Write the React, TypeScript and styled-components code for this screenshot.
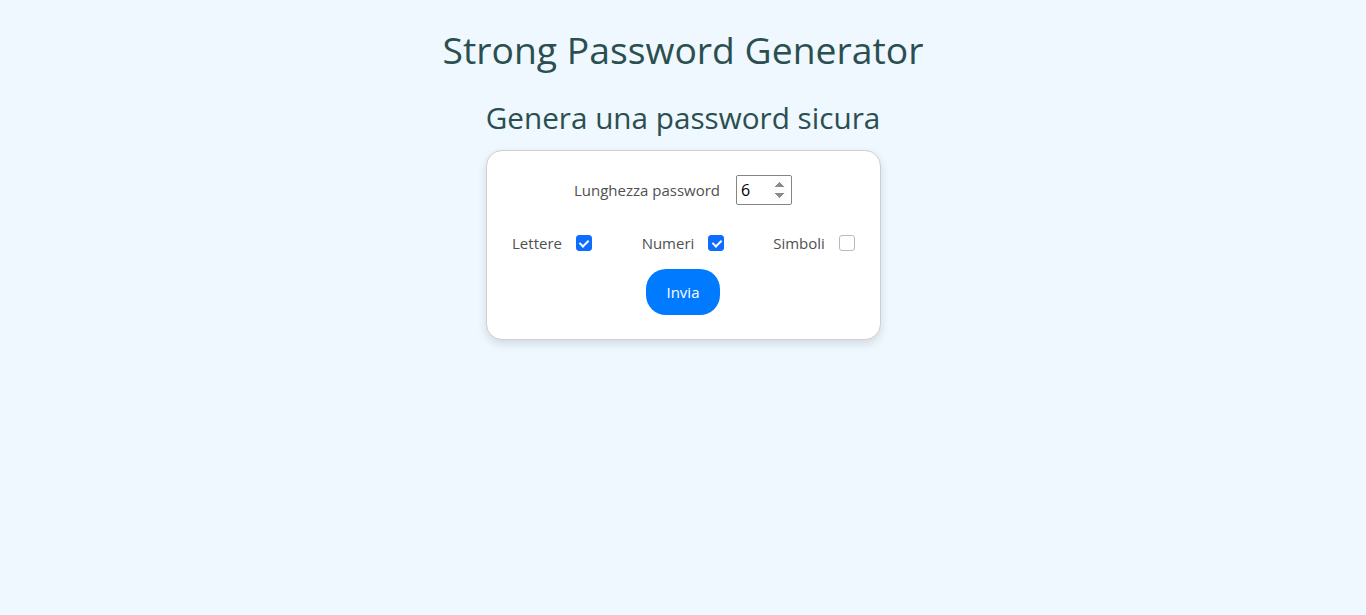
import React, { FunctionComponent, useState } from 'react';
import styled, { createGlobalStyle } from 'styled-components';

const GlobalStyle = createGlobalStyle`
  html, body {
    margin: 0;
    padding: 0;
    background: #eff7ff;
    font-family: "Open Sans", "Noto Sans", sans-serif;
  }
  * {
    box-sizing: border-box;
  }
`;

const Page = styled.main`
    min-height: 615px;
    display: flex;
    flex-direction: column;
    align-items: center;
    padding-top: 22px;
  `,
  Title = styled.h1`
    margin: 0;
    font-size: 37.3px;
    font-weight: 400;
    line-height: 56px;
    color: #2b4f4f;
  `,
  SubTitle = styled.h2`
    margin: 18px 0 0 0;
    font-size: 29.7px;
    font-weight: 400;
    line-height: 44px;
    color: #2b4f4f;
  `,
  Card = styled.form`
    margin-top: 10px;
    width: 395px;
    padding: 24px 0;
    background: #fff;
    border: 1px solid #cfcfcf;
    border-radius: 16px;
    box-shadow: 0 4px 10px rgba(0, 0, 0, 0.12);
    display: flex;
    flex-direction: column;
    align-items: center;
  `,
  LengthRow = styled.div`
    display: flex;
    align-items: center;
    gap: 16px;
    height: 30px;
    margin-bottom: 24px;
  `,
  Label = styled.label`
    font-size: 15px;
    color: #505050;
  `,
  NumberInput = styled.input`
    width: 56px;
    height: 30px;
    padding: 0 4px;
    border: 1px solid #858585;
    border-radius: 2px;
    font-family: inherit;
    font-size: 16px;
    color: #000;
    &::-webkit-inner-spin-button {
      opacity: 1;
    }
  `,
  OptionsRow = styled.div`
    width: 100%;
    display: grid;
    grid-template-columns: repeat(3, 1fr);
    height: 28px;
    margin-bottom: 12px;
  `,
  Option = styled.div`
    display: flex;
    align-items: center;
    justify-content: center;
    gap: 14px;
  `,
  Check = styled.input`
    appearance: none;
    margin: 0;
    width: 16px;
    height: 16px;
    border-radius: 3px;
    border: 1px solid #b9b9b9;
    background: #fff;
    position: relative;
    &:checked {
      background: #0d6efd;
      border-color: #0d6efd;
    }
    &:checked::after {
      content: '';
      position: absolute;
      left: 4.5px;
      top: 2px;
      width: 4px;
      height: 7px;
      border: solid #fff;
      border-width: 0 2px 2px 0;
      transform: rotate(45deg);
    }
  `,
  SubmitButton = styled.button`
    width: 74px;
    height: 46px;
    border: none;
    border-radius: 20px;
    background: #007bff;
    color: #fff;
    font-family: inherit;
    font-size: 15px;
    cursor: pointer;
  `;

type OptionKey = 'letters' | 'numbers' | 'symbols';

const options: { key: OptionKey; label: string }[] = [
  { key: 'letters', label: 'Lettere' },
  { key: 'numbers', label: 'Numeri' },
  { key: 'symbols', label: 'Simboli' },
];

const App: FunctionComponent = () => {
  const [length, setLength] = useState(6);
  const [checked, setChecked] = useState<Record<OptionKey, boolean>>({
    letters: true,
    numbers: true,
    symbols: false,
  });

  return (
    <>
      <GlobalStyle />
      <Page>
        <Title>Strong Password Generator</Title>
        <SubTitle>Genera una password sicura</SubTitle>
        <Card onSubmit={(e) => e.preventDefault()}>
          <LengthRow>
            <Label htmlFor="length">Lunghezza password</Label>
            <NumberInput
              id="length"
              type="number"
              min={4}
              max={32}
              value={length}
              onChange={(e) => setLength(Number(e.target.value))}
            />
          </LengthRow>
          <OptionsRow>
            {options.map((o) => (
              <Option key={o.key}>
                <Label htmlFor={o.key}>{o.label}</Label>
                <Check
                  id={o.key}
                  type="checkbox"
                  checked={checked[o.key]}
                  onChange={() => setChecked({ ...checked, [o.key]: !checked[o.key] })}
                />
              </Option>
            ))}
          </OptionsRow>
          <SubmitButton type="submit">Invia</SubmitButton>
        </Card>
      </Page>
    </>
  );
};

export default App;
